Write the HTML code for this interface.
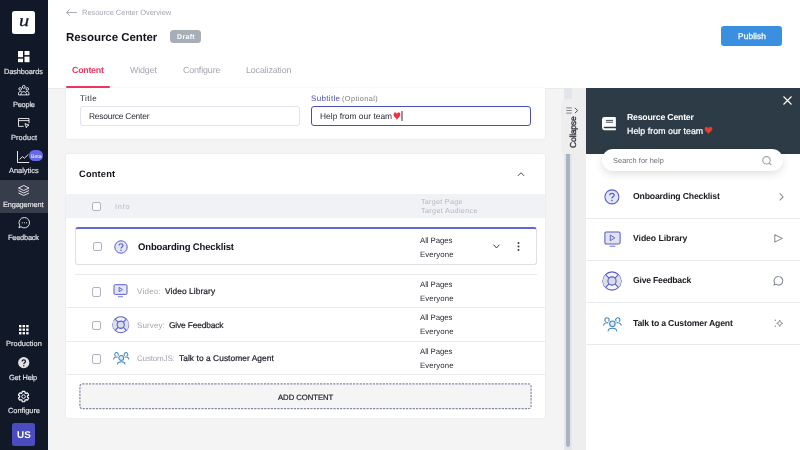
<!DOCTYPE html>
<html><head><meta charset="utf-8">
<style>
*{box-sizing:border-box;margin:0;padding:0}
html,body{width:800px;height:450px;overflow:hidden;background:#fff;font-family:"Liberation Sans","DejaVu Sans",sans-serif;color:#1a1b25}
.abs{position:absolute}
.t{position:absolute;white-space:nowrap;line-height:1;text-rendering:geometricPrecision;will-change:transform;transform:rotate(.02deg)}
.cb{position:absolute;width:9.6px;height:9.4px;border:1px solid #b0b5c0;border-radius:2px;background:#fcfcfd}
.sep{position:absolute;height:1px;background:#eaebee}
svg{position:absolute;overflow:visible}
</style></head><body>
<!-- grey work area -->
<div class="abs" style="left:48px;top:88px;width:538px;height:362px;background:#f4f4f4"></div>
<div class="abs" style="left:48px;top:87.5px;width:538px;height:1.5px;background:linear-gradient(#e2e3e6,#f0f0f1)"></div>
<!-- header -->
<svg style="left:66px;top:9px" width="11" height="7" viewBox="0 0 11 7"><path d="M3.6 0.4 L0.6 3.5 L3.6 6.6 M0.6 3.5 H10.8" fill="none" stroke="#9fa2ab" stroke-width=".9"/></svg>
<div class="abs" style="left:170px;top:30px;width:31px;height:13px;background:#a6aeb6;border-radius:3.5px"></div>
<div class="abs" style="left:721px;top:26px;width:61px;height:20.3px;background:#3b8fe0;border-radius:3px"></div>
<div class="abs" style="left:66px;top:85.5px;width:44px;height:2px;background:#f0385e;border-radius:1px"></div>
<!-- card 1 -->
<div class="abs" style="left:66px;top:88px;width:479px;height:51px;background:#fff;box-shadow:0 0 2px rgba(0,0,0,.09);border-radius:0 0 2px 2px"></div>
<div class="abs" style="left:80.4px;top:106.2px;width:220px;height:19.5px;border:1px solid #e1e3ee;border-radius:3px;background:#fff"></div>
<div class="abs" style="left:311.2px;top:106.2px;width:220px;height:19.6px;border:1.2px solid #4a4eb8;border-radius:3px;background:#fff"></div>
<div class="t" style="left:393.4px;top:109.5px;font-size:13.4px;color:#ee2f3c;transform:scale(.7,1);transform-origin:0 0">&#10084;</div>
<div class="abs" style="left:401px;top:111px;width:2px;height:10px;background:linear-gradient(90deg,#c8c8c8,#666,#c8c8c8)"></div>
<!-- card 2 -->
<div class="abs" style="left:66px;top:154px;width:479px;height:264px;background:#fff;box-shadow:0 0 2px rgba(0,0,0,.09);border-radius:2px"></div>
<svg style="left:517px;top:170.5px" width="8" height="6" viewBox="0 0 8 6"><path d="M0.9 4.9 L4 1.7 L7.1 4.9" fill="none" stroke="#4a4b55" stroke-width="1"/></svg>
<div class="abs" style="left:66px;top:194px;width:479px;height:24px;background:#f1f2f6"></div>
<div class="cb" style="left:91.6px;top:201.8px"></div>
<!-- selected row -->
<div class="abs" style="left:75.3px;top:227px;width:461.4px;height:37.6px;border:1px solid #dfe0e6;border-top:2px solid #6366d9;border-radius:3px;background:#fff"></div>
<div class="cb" style="left:92.8px;top:241.8px"></div>
<svg style="left:114px;top:239.9px" width="14" height="14" viewBox="0 0 14 14"><circle cx="7" cy="7" r="6.2" fill="#e4e6f3" stroke="#595dd0" stroke-width="1"/><path d="M5 5.5 C5 3.2 9 3.2 9 5.5 C9 7 7 6.9 7 8.5" fill="none" stroke="#595dd0" stroke-width="1.15"/><circle cx="7" cy="10.3" r=".7" fill="#595dd0"/></svg>
<svg style="left:493px;top:244px" width="7" height="5" viewBox="0 0 7 5"><path d="M0.5 0.7 L3.5 4 L6.5 0.7" fill="none" stroke="#3a3b45" stroke-width="1"/></svg>
<svg style="left:516.6px;top:242px" width="3" height="9" viewBox="0 0 3 9"><circle cx="1.5" cy="1.1" r="1" fill="#3a3b45"/><circle cx="1.5" cy="4.5" r="1" fill="#3a3b45"/><circle cx="1.5" cy="7.9" r="1" fill="#3a3b45"/></svg>
<!-- rows -->
<div class="sep" style="left:75px;top:273.8px;width:462px"></div>
<div class="sep" style="left:66px;top:307.4px;width:479px"></div>
<div class="sep" style="left:66px;top:341px;width:479px"></div>
<div class="sep" style="left:66px;top:374px;width:479px"></div>
<div class="cb" style="left:91.6px;top:287.3px"></div>
<div class="cb" style="left:91.6px;top:320.6px"></div>
<div class="cb" style="left:91.6px;top:354.3px"></div>
<svg style="left:113px;top:284px" width="15" height="14" viewBox="0 0 15 14"><rect x="1" y="0.7" width="13" height="9.7" rx="1.2" fill="#e4e6f3" stroke="#595dd0" stroke-width="1"/><path d="M6.1 3.4 L9.5 5.6 L6.1 7.8 Z" fill="none" stroke="#595dd0" stroke-width=".9" stroke-linejoin="round"/><path d="M5 12.7 H10" stroke="#8488e0" stroke-width="1.1"/></svg>
<svg style="left:112.3px;top:316px" width="17.5" height="17.5" viewBox="0 0 18 18"><circle cx="9" cy="9" r="8.2" fill="#f4f5fb" stroke="#595dd0" stroke-width="1.1"/><path d="M3.2 3.2 A8.2 8.2 0 0 0 3.2 14.8 L6.4 11.6 A3.7 3.7 0 0 1 6.4 6.4 Z M14.8 3.2 A8.2 8.2 0 0 1 14.8 14.8 L11.6 11.6 A3.7 3.7 0 0 0 11.6 6.4 Z" fill="#dcdeea"/><circle cx="9" cy="9" r="3.7" fill="#d9dbe6" stroke="#595dd0" stroke-width="1.1"/><path d="M3.2 3.2 L6.4 6.4 M14.8 3.2 L11.6 6.4 M3.2 14.8 L6.4 11.6 M14.8 14.8 L11.6 11.6" stroke="#595dd0" stroke-width="1.1"/></svg>
<svg style="left:112.8px;top:351.6px" width="16.5" height="12.5" viewBox="0 0 17 13"><g fill="none" stroke="#3d84bb" stroke-width="1.05" stroke-linecap="round"><circle cx="8.5" cy="6.2" r="2.5" fill="#e1e9f3"/><path d="M4.6 12.6 C5 9.3 12 9.3 12.4 12.6"/><path d="M5.2 3.6 A1.9 1.9 0 1 0 2.4 4.1"/><path d="M0.6 7.4 C0.9 5.6 2.6 4.9 4.4 5.3"/><path d="M11.8 3.6 A1.9 1.9 0 1 1 14.6 4.1"/><path d="M16.4 7.4 C16.1 5.6 14.4 4.9 12.6 5.3"/></g></svg>
<svg style="left:0;top:0" width="800" height="450" viewBox="0 0 800 450"><rect x="79.9" y="383.9" width="451.2" height="24.8" rx="2.5" fill="#f5f5f6" stroke="#838a9d" stroke-width="1.2" stroke-dasharray="2.2 1.1"/></svg>
<!-- scrollbar / collapse -->
<div class="abs" style="left:572px;top:88px;width:14px;height:362px;background:#eeeeee"></div>
<div class="abs" style="left:564px;top:88px;width:8px;height:362px;background:#e2e6ea"></div>
<div class="abs" style="left:566px;top:120px;width:4px;height:327.4px;background:#aab3bf;border-radius:2px"></div>
<div class="abs" style="left:560.5px;top:99px;width:25px;height:55px;background:#eeeeef;border-radius:6px 0 0 6px"></div>
<div class="t" style="left:568.5px;top:147.7px;font-size:8.6px;color:#34353f;-webkit-text-stroke:.35px #34353f;transform:rotate(-90deg);transform-origin:0 0;letter-spacing:-.25px">Collapse</div>
<svg style="left:566px;top:106.6px" width="13" height="7" viewBox="0 0 13 7"><path d="M0.3 0.9 H5.8 M0.3 3.5 H5.8 M0.3 6.1 H5.8" stroke="#6a6b75" stroke-width=".8"/><path d="M9 0.9 L11.6 3.5 L9 6.1" fill="none" stroke="#3a3b45" stroke-width=".9"/></svg>
<!-- right preview panel -->
<div class="abs" style="left:585.5px;top:88px;width:214.5px;height:362px;background:#fff"></div>
<div class="abs" style="left:585.5px;top:88px;width:214.5px;height:65.8px;background:#2c3b45"></div>
<svg style="left:783px;top:96px" width="9" height="9" viewBox="0 0 9 9"><path d="M0.5 0.5 L8.5 8.5 M8.5 0.5 L0.5 8.5" stroke="#fff" stroke-width="1.1"/></svg>
<svg style="left:602.4px;top:117px" width="13.9" height="13.2" viewBox="0 0 13.9 13.2"><path d="M2.4 0 H12.9 Q13.9 0 13.9 1 V9.8 H2.7 Q1.6 9.8 1.6 10.5 Q1.6 11.2 2.7 11.2 H13.9 V13.2 H2.4 Q0 13.2 0 10.8 V2.4 Q0 0 2.4 0 Z" fill="#fff"/><path d="M3.9 3.4 H11 M3.9 5.2 H11" stroke="#2c3b45" stroke-width=".9"/></svg>
<div class="t" style="left:704px;top:125.2px;font-size:12.8px;color:#f03a2c;transform:scale(.83,1);transform-origin:0 0">&#10084;</div>
<div class="abs" style="left:602px;top:149.2px;width:181.3px;height:21.4px;background:#fff;border-radius:11px;box-shadow:0 3px 9px rgba(0,0,0,.12)"></div>
<svg style="left:762.4px;top:155.6px" width="10" height="9.5" viewBox="0 0 10 9.5"><circle cx="4.5" cy="4.3" r="3.7" fill="none" stroke="#9aa4b0" stroke-width="1.1"/><path d="M7.2 7 L9.2 9" stroke="#9aa4b0" stroke-width="1.1"/></svg>
<div class="sep" style="left:585.5px;top:217.6px;width:214.5px"></div>
<div class="sep" style="left:585.5px;top:259.8px;width:214.5px"></div>
<div class="sep" style="left:585.5px;top:301.8px;width:214.5px"></div>
<div class="sep" style="left:585.5px;top:343.8px;width:214.5px"></div>
<svg style="left:603.9px;top:188.9px" width="15.8" height="15.8" viewBox="0 0 14 14"><circle cx="7" cy="7" r="6.2" fill="#e4e6f3" stroke="#595dd0" stroke-width="0.95"/><path d="M5 5.5 C5 3.2 9 3.2 9 5.5 C9 7 7 6.9 7 8.5" fill="none" stroke="#595dd0" stroke-width="1.1"/><circle cx="7" cy="10.3" r=".7" fill="#595dd0"/></svg>
<svg style="left:779px;top:193px" width="5" height="8" viewBox="0 0 5 8"><path d="M0.7 0.4 L4.1 3.9 L0.7 7.4" fill="none" stroke="#878c96" stroke-width="1.05"/></svg>
<svg style="left:603.5px;top:230.6px" width="17" height="17" viewBox="0 0 17 17"><rect x="0.9" y="1" width="15.2" height="11.9" rx="1.3" fill="#e1e3ea" stroke="#595dd0" stroke-width="1.05"/><path d="M6.3 4.1 L10.8 6.9 L6.3 9.7 Z" fill="none" stroke="#595dd0" stroke-width=".95" stroke-linejoin="round"/><path d="M5.7 15.2 H11.3" stroke="#8488e0" stroke-width="1.2"/></svg>
<svg style="left:774.3px;top:234px" width="9" height="9" viewBox="0 0 9 9"><path d="M0.8 0.7 L8.3 4.4 L0.8 8.1 Z" fill="none" stroke="#878c96" stroke-width="1.05" stroke-linejoin="round"/></svg>
<svg style="left:602px;top:270.8px" width="20" height="20" viewBox="0 0 18 18"><circle cx="9" cy="9" r="8.2" fill="#f4f5fb" stroke="#595dd0" stroke-width="1"/><path d="M3.2 3.2 A8.2 8.2 0 0 0 3.2 14.8 L6.4 11.6 A3.7 3.7 0 0 1 6.4 6.4 Z M14.8 3.2 A8.2 8.2 0 0 1 14.8 14.8 L11.6 11.6 A3.7 3.7 0 0 0 11.6 6.4 Z" fill="#dcdeea"/><circle cx="9" cy="9" r="3.7" fill="#d9dbe6" stroke="#595dd0" stroke-width="1"/><path d="M3.2 3.2 L6.4 6.4 M14.8 3.2 L11.6 6.4 M3.2 14.8 L6.4 11.6 M14.8 14.8 L11.6 11.6" stroke="#595dd0" stroke-width="1"/></svg>
<svg style="left:773.4px;top:275.8px" width="10.4" height="9.8" viewBox="0 0 10.4 9.8"><path d="M5.6 0.5 A4.3 4.3 0 1 1 2.9 8.2 L0.9 9.1 L1.6 6.9 A4.3 4.3 0 0 1 5.6 0.5 Z" fill="none" stroke="#878c96" stroke-width="1.05" stroke-linejoin="round"/></svg>
<svg style="left:602.6px;top:316.6px" width="18.8" height="14.4" viewBox="0 0 17 13"><g fill="none" stroke="#3d84bb" stroke-width="0.95" stroke-linecap="round"><circle cx="8.5" cy="6.2" r="2.5" fill="#e1e9f3"/><path d="M4.6 12.6 C5 9.3 12 9.3 12.4 12.6"/><path d="M5.2 3.6 A1.9 1.9 0 1 0 2.4 4.1"/><path d="M0.6 7.4 C0.9 5.6 2.6 4.9 4.4 5.3"/><path d="M11.8 3.6 A1.9 1.9 0 1 1 14.6 4.1"/><path d="M16.4 7.4 C16.1 5.6 14.4 4.9 12.6 5.3"/></g></svg>
<svg style="left:774.3px;top:319px" width="9" height="8.5" viewBox="0 0 9 8.5"><path d="M5.7 1.2 Q6.1 3.9 8.7 4.3 Q6.1 4.7 5.7 7.4 Q5.3 4.7 2.7 4.3 Q5.3 3.9 5.7 1.2 Z" fill="none" stroke="#878c96" stroke-width=".95" stroke-linejoin="round"/><circle cx="1.3" cy="1.3" r=".75" fill="#878c96"/><circle cx="1.3" cy="7.2" r=".75" fill="#878c96"/></svg>
<!-- sidebar -->
<div class="abs" style="left:0;top:0;width:47.8px;height:450px;background:#111827"></div>
<div class="abs" style="left:0;top:179.5px;width:47.8px;height:33.2px;background:#373d4a"></div>
<div class="abs" style="left:12.1px;top:10.7px;width:22.6px;height:23px;background:#fff;border-radius:2.5px"></div>
<div class="t" style="left:18.7px;top:11.5px;font-family:'Liberation Serif','DejaVu Serif',serif;font-style:italic;font-size:17px;color:#111827;z-index:5;-webkit-text-stroke:.25px #111827;transform:scale(1.2,1);transform-origin:0 0">u</div>
<svg style="left:17.9px;top:50.9px" width="11.5" height="11.2" viewBox="0 0 11.5 11.2"><g fill="#fff"><rect x="0" y="0" width="5" height="6.2"/><rect x="6.5" y="0" width="5" height="4.1"/><rect x="0" y="7.7" width="5" height="3.5"/><rect x="6.5" y="5.6" width="5" height="5.6"/></g></svg>
<svg style="left:17.9px;top:84.7px" width="11.5" height="10.4" viewBox="0 0 11.5 10.4"><g fill="none" stroke="#fff" stroke-width=".85"><circle cx="5.75" cy="1.9" r="1.45"/><circle cx="2.2" cy="3.9" r="1.3"/><circle cx="9.3" cy="3.9" r="1.3"/><path d="M0.5 9.9 V8.6 C0.5 6.4 2.6 6 3.6 6.6 M11 9.9 V8.6 C11 6.4 8.9 6 7.9 6.6 M2.9 9.9 C2.9 5.6 8.6 5.6 8.6 9.9 M0.5 9.9 H11"/></g></svg>
<svg style="left:17.9px;top:118.2px" width="11.5" height="10" viewBox="0 0 11.5 10"><g fill="none" stroke="#fff" stroke-width=".85"><path d="M5.6 8.4 H0.5 V0.5 H11 V5.2"/><path d="M0.5 2.6 H11"/><path d="M7 5.6 L11 7.2 L9.2 7.9 L8.4 9.7 Z" stroke-linejoin="round"/></g></svg>
<svg style="left:17.2px;top:150.6px" width="12.2" height="12" viewBox="0 0 12.2 12"><g fill="none" stroke="#fff" stroke-width=".9"><path d="M0.5 0 V11.5 H12.2"/><path d="M2.6 8.4 L5.5 5.6 L7.4 7.2 L11.4 3.4"/></g></svg>
<div class="abs" style="left:28.8px;top:150.2px;width:14.1px;height:10.5px;border-radius:5.3px;background:#6668ea;z-index:3"></div>
<svg style="left:17.9px;top:184.8px" width="11.5" height="11.2" viewBox="0 0 11.5 11.2"><g fill="none" stroke="#fff" stroke-width=".85" stroke-linejoin="round"><path d="M5.75 0.5 L11 3 L5.75 5.5 L0.5 3 Z"/><path d="M0.5 5.5 L5.75 8 L11 5.5"/><path d="M0.5 8 L5.75 10.5 L11 8"/></g></svg>
<svg style="left:17.5px;top:217.4px" width="12.3" height="12" viewBox="0 0 12.3 12"><path d="M6.4 0.5 A5.2 5.2 0 1 1 3 9.7 L0.9 10.9 L1.7 8.3 A5.2 5.2 0 0 1 6.4 0.5 Z" fill="none" stroke="#fff" stroke-width=".85" stroke-linejoin="round"/><circle cx="4.3" cy="5.8" r=".55" fill="#fff"/><circle cx="6.4" cy="5.8" r=".55" fill="#fff"/><circle cx="8.5" cy="5.8" r=".55" fill="#fff"/></svg>
<svg style="left:18.8px;top:324.8px" width="9.6" height="9.4" viewBox="0 0 9.6 9.4"><g fill="#fff"><rect x="0" y="0" width="2.4" height="2.3"/><rect x="3.6" y="0" width="2.4" height="2.3"/><rect x="7.2" y="0" width="2.4" height="2.3"/><rect x="0" y="3.55" width="2.4" height="2.3"/><rect x="3.6" y="3.55" width="2.4" height="2.3"/><rect x="7.2" y="3.55" width="2.4" height="2.3"/><rect x="0" y="7.1" width="2.4" height="2.3"/><rect x="3.6" y="7.1" width="2.4" height="2.3"/><rect x="7.2" y="7.1" width="2.4" height="2.3"/></g></svg>
<svg style="left:17.9px;top:356.9px" width="11.5" height="11.3" viewBox="0 0 11.5 11.3"><circle cx="5.75" cy="5.65" r="5.6" fill="#e2e2e4"/><path d="M4.1 4.4 C4.1 2.3 7.5 2.3 7.5 4.4 C7.5 5.7 5.8 5.6 5.8 7" fill="none" stroke="#111827" stroke-width="1.2"/><circle cx="5.8" cy="8.7" r=".75" fill="#111827"/></svg>
<svg style="left:17.1px;top:389.6px" width="13.08" height="13.08" viewBox="0 0 24 24"><path fill="none" stroke="#fff" stroke-width="2.2" stroke-linejoin="round" d="M19.14,12.94c0.04-0.3,0.06-0.61,0.06-0.94c0-0.32-0.02-0.64-0.07-0.94l2.03-1.58c0.18-0.14,0.23-0.41,0.12-0.61l-1.92-3.32c-0.12-0.22-0.37-0.29-0.59-0.22l-2.39,0.96c-0.5-0.38-1.03-0.7-1.62-0.94L14.4,2.81c-0.04-0.24-0.24-0.41-0.48-0.41h-3.84c-0.24,0-0.43,0.17-0.47,0.41L9.25,5.35C8.66,5.59,8.12,5.92,7.63,6.29L5.24,5.33c-0.22-0.08-0.47,0-0.59,0.22L2.74,8.87C2.62,9.08,2.66,9.34,2.86,9.48l2.03,1.58C4.84,11.36,4.8,11.69,4.8,12s0.02,0.64,0.07,0.94l-2.03,1.58c-0.18,0.14-0.23,0.41-0.12,0.61l1.92,3.32c0.12,0.22,0.37,0.29,0.59,0.22l2.39-0.96c0.5,0.38,1.03,0.7,1.62,0.94l0.36,2.54c0.05,0.24,0.24,0.41,0.48,0.41h3.84c0.24,0,0.44-0.17,0.47-0.41l0.36-2.54c0.59-0.24,1.13-0.56,1.62-0.94l2.39,0.96c0.22,0.08,0.47,0,0.59-0.22l1.92-3.32c0.12-0.22,0.07-0.47-0.12-0.61L19.14,12.94z"/><circle cx="12" cy="12" r="3.3" fill="none" stroke="#fff" stroke-width="1.7"/></svg>
<div class="abs" style="left:12.1px;top:423px;width:22.6px;height:22.6px;background:#4a4cc0;border-radius:2.5px"></div>
<div class="t" style="left:81.62px;top:9.00px;font-size:7.5px;font-weight:normal;color:#a5a7b0;letter-spacing:-0.035px;">Resource Center Overview</div>
<div class="t" style="left:65.92px;top:32.50px;font-size:11.5px;font-weight:bold;color:#12131c;letter-spacing:-0.050px;">Resource Center</div>
<div class="t" style="left:176.65px;top:34.00px;font-size:7px;font-weight:bold;color:#ffffff;letter-spacing:0.339px;">Draft</div>
<div class="t" style="left:737.69px;top:32.40px;font-size:8.3px;font-weight:normal;color:#ffffff;letter-spacing:0.127px;-webkit-text-stroke:.25px #fff;">Publish</div>
<div class="t" style="left:71.81px;top:65.75px;font-size:8.9px;font-weight:bold;color:#f0385e;letter-spacing:-0.274px;">Content</div>
<div class="t" style="left:129.81px;top:65.75px;font-size:8.9px;font-weight:normal;color:#a5a7b0;letter-spacing:-0.147px;">Widget</div>
<div class="t" style="left:182.81px;top:65.75px;font-size:8.9px;font-weight:normal;color:#a5a7b0;letter-spacing:-0.137px;">Configure</div>
<div class="t" style="left:246.31px;top:65.75px;font-size:8.9px;font-weight:normal;color:#a5a7b0;letter-spacing:-0.135px;">Localization</div>
<div class="t" style="left:80.10px;top:95.00px;font-size:8px;font-weight:normal;color:#2a2b36;letter-spacing:0.493px;">Title</div>
<div class="t" style="left:89.18px;top:112.25px;font-size:8.4px;font-weight:normal;color:#2a2b36;letter-spacing:-0.205px;">Resource Center</div>
<div class="t" style="left:311.35px;top:94.75px;font-size:8px;font-weight:normal;color:#4a4eb8;letter-spacing:0.338px;">Subtitle</div>
<div class="t" style="left:342.13px;top:94.75px;font-size:7.3px;font-weight:normal;color:#7b7d88;letter-spacing:0.409px;">(Optional)</div>
<div class="t" style="left:320.33px;top:112.25px;font-size:8.4px;font-weight:normal;color:#2a2b36;letter-spacing:0.024px;">Help from our team</div>
<div class="t" style="left:79.28px;top:170.00px;font-size:9.3px;font-weight:bold;color:#12131c;letter-spacing:0.176px;">Content</div>
<div class="t" style="left:114.73px;top:203.00px;font-size:7.3px;font-weight:normal;color:#b5b8c2;letter-spacing:0.786px;">Info</div>
<div class="t" style="left:420.84px;top:198.30px;font-size:7.2px;font-weight:normal;color:#b3b7c2;letter-spacing:0.265px;">Target Page</div>
<div class="t" style="left:420.84px;top:207.40px;font-size:7.2px;font-weight:normal;color:#b3b7c2;letter-spacing:0.355px;">Target Audience</div>
<div class="t" style="left:138.03px;top:242.50px;font-size:9.5px;font-weight:bold;color:#12131c;letter-spacing:-0.146px;">Onboarding Checklist</div>
<div class="t" style="left:420.36px;top:236.75px;font-size:7.8px;font-weight:normal;color:#2a2b36;letter-spacing:-0.053px;">All Pages</div>
<div class="t" style="left:420.36px;top:251.00px;font-size:7.8px;font-weight:normal;color:#2a2b36;letter-spacing:0.082px;">Everyone</div>
<div class="t" style="left:420.36px;top:280.50px;font-size:7.8px;font-weight:normal;color:#2a2b36;letter-spacing:-0.053px;">All Pages</div>
<div class="t" style="left:420.36px;top:294.80px;font-size:7.8px;font-weight:normal;color:#2a2b36;letter-spacing:0.082px;">Everyone</div>
<div class="t" style="left:420.36px;top:313.80px;font-size:7.8px;font-weight:normal;color:#2a2b36;letter-spacing:-0.053px;">All Pages</div>
<div class="t" style="left:420.36px;top:328.20px;font-size:7.8px;font-weight:normal;color:#2a2b36;letter-spacing:0.082px;">Everyone</div>
<div class="t" style="left:420.36px;top:347.50px;font-size:7.8px;font-weight:normal;color:#2a2b36;letter-spacing:-0.053px;">All Pages</div>
<div class="t" style="left:420.36px;top:361.60px;font-size:7.8px;font-weight:normal;color:#2a2b36;letter-spacing:0.082px;">Everyone</div>
<div class="t" style="left:136.85px;top:288.25px;font-size:8.0px;font-weight:normal;color:#a5a7b0;letter-spacing:0.251px;">Video:</div>
<div class="t" style="left:164.58px;top:287.25px;font-size:8.4px;font-weight:normal;color:#1a1b25;letter-spacing:0.074px;-webkit-text-stroke:.2px #1a1b25;">Video Library</div>
<div class="t" style="left:136.85px;top:321.50px;font-size:8.0px;font-weight:normal;color:#a5a7b0;letter-spacing:0.113px;">Survey:</div>
<div class="t" style="left:168.83px;top:320.50px;font-size:8.4px;font-weight:normal;color:#1a1b25;letter-spacing:-0.166px;-webkit-text-stroke:.2px #1a1b25;">Give Feedback</div>
<div class="t" style="left:136.85px;top:355.00px;font-size:8.0px;font-weight:normal;color:#a5a7b0;letter-spacing:-0.166px;">CustomJS:</div>
<div class="t" style="left:179.08px;top:354.00px;font-size:8.4px;font-weight:normal;color:#1a1b25;letter-spacing:0.055px;-webkit-text-stroke:.2px #1a1b25;">Talk to a Customer Agent</div>
<div class="t" style="left:278.12px;top:393.50px;font-size:7.7px;font-weight:normal;color:#1a1b25;letter-spacing:-0.026px;-webkit-text-stroke:.2px #1a1b25;">ADD CONTENT</div>
<div class="t" style="left:627.07px;top:113.00px;font-size:8.7px;font-weight:bold;color:#ffffff;letter-spacing:-0.190px;">Resource Center</div>
<div class="t" style="left:627.06px;top:127.00px;font-size:8.8px;font-weight:normal;color:#ffffff;letter-spacing:0.052px;-webkit-text-stroke:.22px #fff;">Help from our team</div>
<div class="t" style="left:613.13px;top:156.50px;font-size:7.4px;font-weight:normal;color:#6a6f77;letter-spacing:0.044px;">Search for help</div>
<div class="t" style="left:632.57px;top:192.00px;font-size:8.7px;font-weight:bold;color:#1b1c22;letter-spacing:-0.179px;">Onboarding Checklist</div>
<div class="t" style="left:632.57px;top:234.00px;font-size:8.7px;font-weight:bold;color:#1b1c22;letter-spacing:-0.084px;">Video Library</div>
<div class="t" style="left:632.57px;top:276.25px;font-size:8.7px;font-weight:bold;color:#1b1c22;letter-spacing:-0.247px;">Give Feedback</div>
<div class="t" style="left:632.57px;top:318.50px;font-size:8.7px;font-weight:bold;color:#1b1c22;letter-spacing:-0.191px;">Talk to a Customer Agent</div>
<div class="t" style="left:4.38px;top:67.60px;font-size:7.4px;font-weight:normal;color:#e4e5ea;letter-spacing:-0.108px;-webkit-text-stroke:.15px #e4e5ea;z-index:5;">Dashboards</div>
<div class="t" style="left:12.53px;top:100.90px;font-size:7.4px;font-weight:normal;color:#e4e5ea;letter-spacing:-0.215px;-webkit-text-stroke:.15px #e4e5ea;z-index:5;">People</div>
<div class="t" style="left:10.53px;top:134.10px;font-size:7.4px;font-weight:normal;color:#e4e5ea;letter-spacing:0.101px;-webkit-text-stroke:.15px #e4e5ea;z-index:5;">Product</div>
<div class="t" style="left:8.63px;top:167.40px;font-size:7.4px;font-weight:normal;color:#e4e5ea;letter-spacing:0.008px;-webkit-text-stroke:.15px #e4e5ea;z-index:5;">Analytics</div>
<div class="t" style="left:3.38px;top:200.90px;font-size:7.4px;font-weight:normal;color:#e4e5ea;letter-spacing:-0.159px;-webkit-text-stroke:.15px #e4e5ea;z-index:5;">Engagement</div>
<div class="t" style="left:8.13px;top:233.90px;font-size:7.4px;font-weight:normal;color:#e4e5ea;letter-spacing:-0.211px;-webkit-text-stroke:.15px #e4e5ea;z-index:5;">Feedback</div>
<div class="t" style="left:5.53px;top:340.25px;font-size:7.4px;font-weight:normal;color:#e4e5ea;letter-spacing:0.055px;-webkit-text-stroke:.15px #e4e5ea;z-index:5;">Production</div>
<div class="t" style="left:9.38px;top:373.60px;font-size:7.4px;font-weight:normal;color:#e4e5ea;letter-spacing:-0.133px;-webkit-text-stroke:.15px #e4e5ea;z-index:5;">Get Help</div>
<div class="t" style="left:7.53px;top:406.75px;font-size:7.4px;font-weight:normal;color:#e4e5ea;letter-spacing:-0.013px;-webkit-text-stroke:.15px #e4e5ea;z-index:5;">Configure</div>
<div class="t" style="left:16.61px;top:431.00px;font-size:9.8px;font-weight:bold;color:#ffffff;letter-spacing:0.255px;z-index:5;">US</div>
<div class="t" style="left:30.74px;top:154.60px;font-size:5.2px;font-weight:normal;color:#ffffff;letter-spacing:-0.051px;z-index:5;">Beta</div>
</body></html>
